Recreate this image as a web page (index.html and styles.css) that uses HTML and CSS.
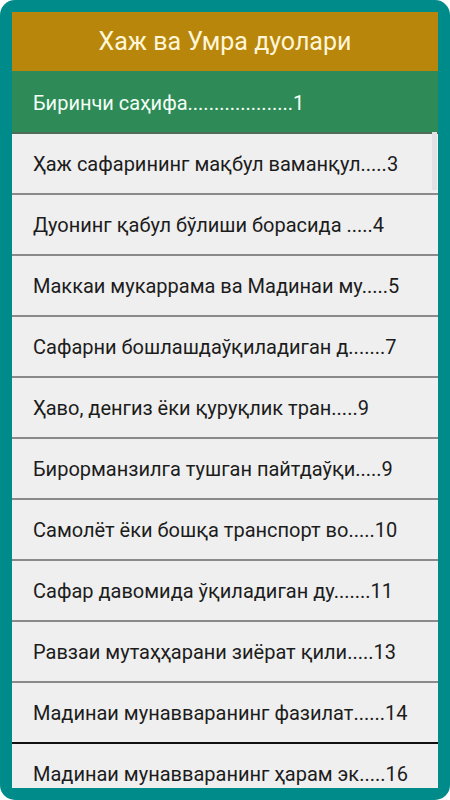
FILE: index.html
```html
<!DOCTYPE html>
<html lang="uz">
<head>
  <meta charset="UTF-8" />
  <meta name="viewport" content="width=device-width, initial-scale=1" />
  <title>Хаж ва Умра дуолари</title>
  <link rel="stylesheet" href="styles.css">
</head>
<body>
  <div class="frame">
    <div class="panel">
      <div class="title">Хаж ва Умра дуолари</div>

      <ul class="contents">
        <li class="item active">Биринчи саҳифа....................1</li>
        <li class="item">Ҳаж сафарининг мақбул ваманқул.....3</li>
        <li class="item">Дуонинг қабул бўлиши борасида .....4</li>
        <li class="item">Маккаи мукаррама ва Мадинаи му.....5</li>
        <li class="item">Сафарни бошлашдаўқиладиган д.......7</li>
        <li class="item">Ҳаво, денгиз ёки қуруқлик тран.....9</li>
        <li class="item">Бирорманзилга тушган пайтдаўқи.....9</li>
        <li class="item">Самолёт ёки бошқа транспорт во.....10</li>
        <li class="item">Сафар давомида ўқиладиган ду.......11</li>
        <li class="item">Равзаи мутаҳҳарани зиёрат қили.....13</li>
        <li class="item pressed">Мадинаи мунавваранинг фазилат......14</li>
        <li class="item">Мадинаи мунавваранинг ҳарам эк.....16</li>
      </ul>

      <div class="thumb"></div>
    </div>
  </div>
</body>
</html>
```

FILE: styles.css
```css
body {
  margin: 0;
  background: #ffffff;
  font-family: Roboto, 'Noto Sans', sans-serif;
}

.frame {
  height: 800px;
  box-sizing: border-box;
  padding: 12px;
  background: #008b8b;
  border-radius: 15px;
}

.panel {
  position: relative;
  height: 776px;
  overflow: hidden;
  background: #efefef;
}

.title {
  height: 59px;
  display: flex;
  align-items: center;
  justify-content: center;
  background: #b8860b;
  color: #fff6d8;
  font-size: 25px;
}

.contents {
  list-style: none;
  margin: 0;
  padding: 0;
}

.item {
  height: 59px;
  box-sizing: content-box;
  display: flex;
  align-items: center;
  padding: 2px 0 0 21px;
  margin-top: -2px;
  border-bottom: 2px solid #8a8a8a;
  font-size: 20px;
  color: #1c1c1c;
  white-space: nowrap;
}

.item:first-child {
  margin-top: 0;
}

.item.active {
  background: #2e8b57;
  color: #f4fff6;
  border-bottom-color: #4f6b5a;
}

.item.pressed {
  border-bottom-color: #111111;
}

.thumb {
  position: absolute;
  top: 120px;
  right: 1px;
  width: 5px;
  height: 58px;
  background: #e2e2e2;
}
```
